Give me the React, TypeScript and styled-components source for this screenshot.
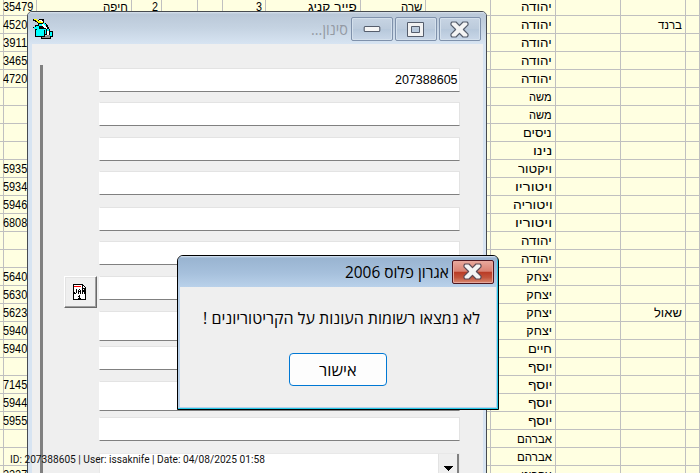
import React, { useLayoutEffect, useRef } from "react";
import styled, { createGlobalStyle } from "styled-components";

const GlobalStyle = createGlobalStyle`
  *, *::before, *::after { box-sizing: border-box; }
  body { margin: 0; overflow: hidden; }
`;

const Desktop = styled.div`
  position: relative;
  width: 700px;
  height: 473px;
  overflow: hidden;
  background: #ffffe1;
  color: #000;
  font-family: "Liberation Sans", sans-serif;
`;

/* ---------- text of a fixed measure ---------- */

const Run = styled.span`
  display: inline-block;
  white-space: pre;
  flex: none;
`;

const Measure = styled.span<{ $w: number; $rtl?: boolean }>`
  display: inline-flex;
  flex: none;
  width: ${(p) => p.$w}px;
  direction: ${(p) => (p.$rtl ? "rtl" : "ltr")};
`;

function FitText({ text, width, rtl }: { text: string; width: number; rtl?: boolean }) {
  const ref = useRef<HTMLSpanElement>(null);
  useLayoutEffect(() => {
    const el = ref.current;
    if (!el) return;
    el.style.transformOrigin = rtl ? "right center" : "left center";
    el.style.transform = `scaleX(${width / el.offsetWidth})`;
  }, [text, width, rtl]);
  return (
    <Measure $w={width} $rtl={rtl}>
      <Run ref={ref}>{text}</Run>
    </Measure>
  );
}

/* ---------- data sheet ---------- */

const Sheet = styled.div`
  display: grid;
  grid-template-columns: 1px 36px 95px 30px 36px 25px 43px 95px 65px 65px 65px 65px 65px 14px;
  grid-auto-rows: 18px;
  margin-top: -2px;
`;

const Cell = styled.div<{ $left?: boolean }>`
  display: flex;
  align-items: center;
  justify-content: ${(p) => (p.$left ? "flex-start" : "flex-end")};
  padding: ${(p) => (p.$left ? "1px 0 0 2px" : "1px 3px 0 0")};
  border-right: 1px solid #c0c0c0;
  border-bottom: 1px solid #c0c0c0;
  font-size: 12.5px;
  line-height: 17px;
  overflow: hidden;
`;

type Item = [string, number];

const ids = [
  "35479", "4520", "3911", "3465", "4720", "", "", "", "", "5935", "5934", "5946", "6808", "",
  "", "5640", "5630", "5623", "5940", "5940", "", "7145", "5944", "5955", "", "", "2227",
];

const names: Item[] = [
  ["יהודה", 31], ["יהודה", 31], ["יהודה", 31], ["יהודה", 31], ["יהודה", 31],
  ["משה", 23], ["משה", 23], ["ניסים", 29], ["נינו", 19], ["ויקטור", 34],
  ["ויטוריו", 37], ["ויטוריה", 40], ["ויטוריו", 37], ["יהודה", 31], ["יהודה", 31],
  ["יצחק", 26], ["יצחק", 26], ["יצחק", 26], ["יצחק", 26], ["חיים", 24],
  ["יוסף", 24], ["יוסף", 24], ["יוסף", 24], ["יוסף", 24], ["אברהם", 35],
  ["אברהם", 35], ["עקרינו", 31],
];

const spouses: Record<number, Item> = { 1: ["ברנד", 24], 17: ["שאול", 28] };

const firstRow: Record<number, Item> = {
  2: ["חיפה", 25],
  3: ["2", 6],
  6: ["3", 6],
  7: ["פייר קניג", 49],
  8: ["שרה", 21],
};

function cellItem(row: number, col: number): Item | undefined {
  if (col === 1) return ids[row] ? [ids[row], ids[row].length * 6.1] : undefined;
  if (col === 10) return names[row];
  if (col === 12) return spouses[row];
  return row === 0 ? firstRow[col] : undefined;
}

function DataSheet() {
  return (
    <Sheet>
      {names.flatMap((_, r) =>
        Array.from({ length: 14 }, (_, c) => {
          const item = cellItem(r, c);
          return (
            <Cell key={`${r}-${c}`} $left={c === 1}>
              {item && <FitText text={item[0]} width={item[1]} rtl={c > 6} />}
            </Cell>
          );
        })
      )}
    </Sheet>
  );
}

/* ---------- filter window ---------- */

const FilterFrame = styled.section`
  position: absolute;
  left: 27px;
  top: 11px;
  width: 460px;
  height: 480px;
  border: 1px solid #474b50;
  border-radius: 5px 5px 0 0;
  background: #d7e4f2;
  overflow: hidden;
`;

const FilterTitle = styled.header`
  display: flex;
  height: 32px;
  padding: 5px 5px 0 4px;
  background: linear-gradient(#dbe4ee 0, #bac8d8 2px, #c5d3e2 50%, #d7e4f2 100%);
`;

const IconSlot = styled.div`
  padding: 2px 0 0 1px;
`;

const Caption = styled.div`
  display: flex;
  justify-content: flex-end;
  flex: 1;
  padding-right: 3px;
  color: #949aa4;
  font: 16px/25px "Open Sans", "Noto Sans", sans-serif;
`;

const Controls = styled.div`
  display: flex;
  gap: 2px;
`;

const ControlButton = styled.button`
  display: flex;
  align-items: center;
  justify-content: center;
  width: 42px;
  height: 24px;
  padding: 0 1px 0 0;
  border: 1px solid #7f91ab;
  border-radius: 2px;
  background: linear-gradient(#c7d4e3, #bccbdc 48%, #b7c8db 52%, #c9d7e8);
  box-shadow: inset 0 0 0 1px #d4e0ec;
`;

const FilterBody = styled.div`
  display: flex;
  height: 440px;
  margin: 0 3px 0 4px;
  background: #efefef;
`;

const Rail = styled.div`
  width: 3px;
  margin: 21px 0 0 8px;
  background: #808080;
`;

const Tools = styled.div`
  width: 56px;
  padding: 232px 0 0 21px;
`;

const DateButton = styled.button`
  display: flex;
  align-items: center;
  justify-content: center;
  width: 33px;
  height: 32px;
  padding: 0 2px 0 0;
  border: 1px solid;
  border-color: #fff #696969 #696969 #fff;
  background: #efefef;
  box-shadow: inset -1px -1px 0 #a0a0a0, inset 1px 1px 0 #e3e3e3;
`;

const Fields = styled.div`
  width: 361px;
  padding-top: 24px;
`;

const Field = styled.div<{ $h: number; $gap: number }>`
  display: flex;
  align-items: center;
  justify-content: flex-end;
  height: ${(p) => p.$h}px;
  margin-bottom: ${(p) => p.$gap}px;
  padding-right: 1px;
  background: #fff;
  border: 1px solid;
  border-color: #e3e3e3 #e3e3e3 #808080 #fff;
  font-size: 12.5px;
`;

const Combo = styled.div`
  display: flex;
  justify-content: flex-end;
  height: 40px;
  background: #fff;
  border: 1px solid #e8e8e8;
`;

const ComboButton = styled.div`
  display: flex;
  justify-content: center;
  width: 21px;
  padding-top: 12px;
  background: #efefef;
  border-left: 1px solid #e3e3e3;
  border-right: 2px solid #808080;
`;

const fields: { h: number; gap: number; value?: string }[] = [
  { h: 24, gap: 10, value: "207388605" },
  { h: 24, gap: 11 },
  { h: 24, gap: 10 },
  { h: 24, gap: 12 },
  { h: 24, gap: 10 },
  { h: 24, gap: 11 },
  { h: 24, gap: 11 },
  { h: 30, gap: 5 },
  { h: 24, gap: 11 },
  { h: 30, gap: 6 },
  { h: 24, gap: 12 },
];

/* ---------- icons ---------- */

const AppIcon = () => (
  <svg width="20" height="20" viewBox="0 0 20 20" shapeRendering="crispEdges">
    <path d="M0 0h4v1h2V0h5v4h2v1h1v1h1v2h1v2h-3v1H2V9H0V8h2V6h3V4H4V3H2V2H0z" fill="#000" />
    <path d="M1 0h3v1H1zM3 1h2v1H3zM4 2h4v1H4zM5 3h5v1H5z" fill="#ffff00" />
    <path d="M6 1h3v1H6zM8 2h2v1H8z" fill="#fff" />
    <path d="M3 7h3v1H3zM1 8h5v2H1zM6 5h3v2H6zM10 4h2v1h-2zM11 5h2v2h-2z" fill="#00ffff" />
    <path d="M9 5h2v1h1v1h1v1h1v2h-1V9h-2V8h-1V7H9z" fill="#fff" />
    <path d="M12 10h2V8h2v2h1v2h3v6h-2v2H8v-2H2v-8h10z" fill="#000" />
    <path d="M3 11h8v6H3zM4 10h9v5h-1v-4H4zM14 10h2v2h-2zM17 13h2v4h-2z" fill="#00ffff" />
    <path d="M14 12h2v4h-2z" fill="#fff" />
    <path d="M9 18h8v1H9zM12 16h5v2h-5z" fill="#8c8c8c" />
    <path d="M12 16h2v1h-2z" fill="#c8c8c8" />
  </svg>
);

const MinimizeIcon = () => (
  <svg width="18" height="8" viewBox="0 0 18 8">
    <rect x="1.2" y="1.5" width="15.6" height="5" rx="1" fill="#f6f6f6" stroke="#555d6c" strokeWidth="1.1" />
  </svg>
);

const MaximizeIcon = () => (
  <svg width="17" height="15" viewBox="0 0 17 15">
    <path d="M.5.5h16v14H.5zM4.5 4.5v6h8v-6z" fill="#f2f2f2" fillRule="evenodd" stroke="#555d6c" />
  </svg>
);

const CloseIcon = ({ stroke }: { stroke: string }) => (
  <svg width="19" height="17" viewBox="0 0 19 17">
    <path
      d="M2 1h4l3.5 3.7L13 1h4l1 1.2v1.7L13.4 8.5l4.6 4.6v1.7L17 16h-4l-3.5-3.7L6 16H2l-1-1.2v-1.7l4.6-4.6L1 3.9V2.2z"
      fill="#f4f4f4"
      stroke={stroke}
      strokeWidth="1.2"
      strokeLinejoin="round"
    />
  </svg>
);

const CalendarIcon = () => (
  <svg width="13" height="16" viewBox="0 0 13 16" shapeRendering="crispEdges">
    <path d="M0 0h10v1h1v1h1v1h1v13H0z" fill="#000" />
    <path d="M1 1h8v4h3v10H1z" fill="#fff" />
    <path d="M1 2h7v1H1z" fill="#f00" />
    <path d="M10 2h1v1h1v1h-2z" fill="#fff" />
    <path
      d="M3 5h1v4H3zM1 8h1v1H1zM1 9h2v1H1zM5 6h1v4H5zM6 5h1v1H6zM7 6h1v4H7zM6 7h1v1H6zM9 5h1v5H9zM10 6h1v2h-1zM11 5h1v5h-1zM6 11h1v3H6zM5 12h1v1H5zM5 14h3v1H5z"
      fill="#000"
    />
  </svg>
);

const ArrowIcon = () => (
  <svg width="9" height="5" viewBox="0 0 9 5" shapeRendering="crispEdges">
    <path d="M0 0h9v1H8v1H7v1H6v1H5v1H4V4H3V3H2V2H1V1H0z" />
  </svg>
);

function FilterWindow() {
  return (
    <FilterFrame>
      <FilterTitle>
        <IconSlot>
          <AppIcon />
        </IconSlot>
        <Caption>
          <FitText text="סינון..." width={37} rtl />
        </Caption>
        <Controls>
          <ControlButton>
            <MinimizeIcon />
          </ControlButton>
          <ControlButton>
            <MaximizeIcon />
          </ControlButton>
          <ControlButton>
            <CloseIcon stroke="#555d6c" />
          </ControlButton>
        </Controls>
      </FilterTitle>
      <FilterBody>
        <Rail />
        <Tools>
          <DateButton>
            <CalendarIcon />
          </DateButton>
        </Tools>
        <Fields>
          {fields.map((f, i) => (
            <Field key={i} $h={f.h} $gap={f.gap}>
              {f.value && <FitText text={f.value} width={63} />}
            </Field>
          ))}
          <Combo>
            <ComboButton>
              <ArrowIcon />
            </ComboButton>
          </Combo>
        </Fields>
      </FilterBody>
    </FilterFrame>
  );
}

/* ---------- message box ---------- */

const DialogFrame = styled.section`
  position: absolute;
  left: 177px;
  top: 255px;
  width: 322px;
  height: 155px;
  border: 1px solid #000;
  border-radius: 6px 6px 0 0;
  background: #b9d1ea;
  box-shadow: inset -1px -1px 0 #25c9e8;
  overflow: hidden;
  font-family: "Open Sans", "Noto Sans", sans-serif;
`;

const DialogTitle = styled.header`
  display: flex;
  justify-content: flex-end;
  gap: 3px;
  height: 31px;
  margin-right: 1px;
  padding: 4px 3px 0 0;
  background: linear-gradient(#dce8f4 0, #99b4d1 2px, #a6c0dc 55%, #b9d1ea 100%);
  font-size: 16px;
  line-height: 24px;
`;

const DialogClose = styled.button`
  display: flex;
  align-items: center;
  justify-content: center;
  width: 42px;
  height: 24px;
  padding: 0 1px 1px 0;
  border: 1px solid #4d1620;
  border-radius: 2px;
  background: linear-gradient(#e9a99d, #d98172 47%, #b93a25 50%, #c2543c 75%, #d98a72);
  box-shadow: inset 0 0 0 1px #e6a79c;
`;

const DialogBody = styled.div`
  display: flex;
  flex-direction: column;
  align-items: center;
  height: 120px;
  margin: 0 2px 0 2px;
  padding-top: 19px;
  background: #efefef;
`;

const Message = styled.div`
  display: flex;
  justify-content: flex-end;
  width: 100%;
  height: 47px;
  padding-right: 16px;
  font-size: 16px;
  line-height: 24px;
`;

const OkButton = styled.button`
  display: flex;
  align-items: center;
  justify-content: center;
  width: 98px;
  height: 33px;
  padding: 0;
  border: 1px solid #0078d4;
  border-radius: 4px;
  background: #fdfdfd;
  color: #000;
  font: 16px/24px "Open Sans", "Noto Sans", sans-serif;
`;

function MessageBox() {
  return (
    <DialogFrame>
      <DialogTitle>
        <FitText text="אגרון פלוס 2006" width={104} rtl />
        <DialogClose>
          <CloseIcon stroke="#5c4a55" />
        </DialogClose>
      </DialogTitle>
      <DialogBody>
        <Message>
          <FitText text="לא נמצאו רשומות העונות על הקריטוריונים !" width={277} rtl />
        </Message>
        <OkButton>
          <FitText text="אישור" width={38} rtl />
        </OkButton>
      </DialogBody>
    </DialogFrame>
  );
}

const Watermark = styled.div`
  position: absolute;
  left: 10px;
  top: 452px;
  color: #111;
  font: 11px/15px Roboto, sans-serif;
`;

export default function App() {
  return (
    <>
      <GlobalStyle />
      <Desktop>
        <DataSheet />
        <FilterWindow />
        <MessageBox />
        <Watermark>
          <FitText text="ID: 207388605 | User: issaknife | Date: 04/08/2025 01:58" width={255} />
        </Watermark>
      </Desktop>
    </>
  );
}
